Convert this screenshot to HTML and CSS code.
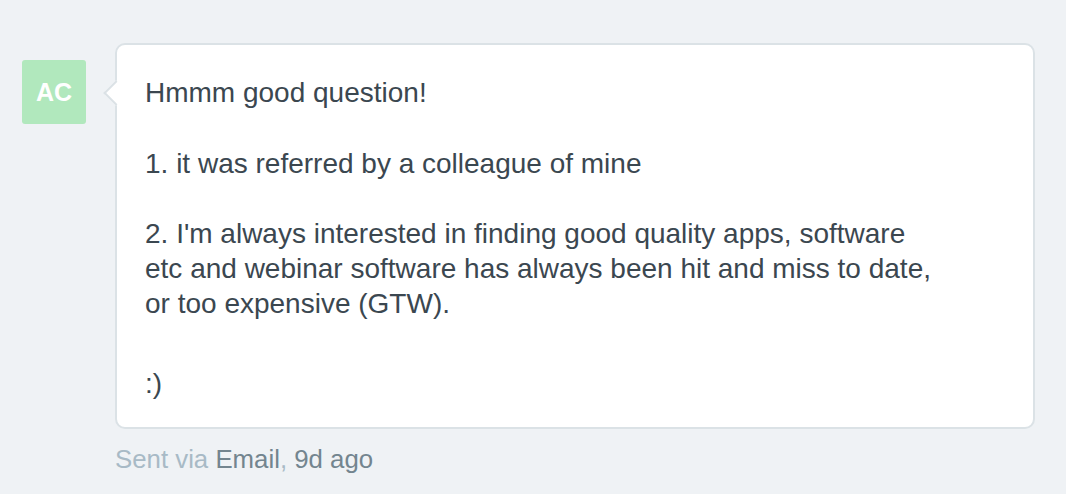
FILE: index.html
```html
<!DOCTYPE html>
<html>
<head>
<meta charset="utf-8">
<link rel="stylesheet" href="styles.css">
</head>
<body>
<div class="message">
  <div class="avatar">AC</div>
  <div class="content">
    <div class="bubble">
      <p>Hmmm good question!</p>
      <p>1. it was referred by a colleague of mine</p>
      <p>2. I'm always interested in finding good quality apps, software<br>etc and webinar software has always been hit and miss to date,<br>or too expensive (GTW).</p>
      <p class="smile">:)</p>
    </div>
    <div class="meta"><span class="via">Sent via</span> <span class="strong">Email</span><span class="via">,</span> <span class="strong">9d ago</span></div>
  </div>
</div>
</body>
</html>
```
FILE: styles.css
```css
html, body {
  margin: 0;
  padding: 0;
  background: #eff2f5;
  font-family: "Liberation Sans", Arial, sans-serif;
}
.message {
  display: flex;
  align-items: flex-start;
  gap: 29px;
  padding: 43px 31px 0 22px;
}
.avatar {
  flex: none;
  width: 64px;
  height: 64px;
  margin-top: 17px;
  border-radius: 3px;
  background: #b1e8bd;
  color: #fff;
  font-weight: bold;
  font-size: 25px;
  display: flex;
  align-items: center;
  justify-content: center;
}
.content {
  flex: 1;
}
.bubble {
  position: relative;
  background: #fff;
  border: 2px solid #dbe2e6;
  border-radius: 10px;
  padding: 30px 28px 26px 28px;
  color: #3b4750;
  font-size: 28px;
  line-height: 35px;
}
.bubble::before {
  content: "";
  position: absolute;
  left: -10px;
  top: 39px;
  width: 16px;
  height: 16px;
  background: #fff;
  border-left: 2px solid #dbe2e6;
  border-bottom: 2px solid #dbe2e6;
  transform: rotate(45deg);
}
.bubble p {
  margin: 0 0 35.5px 0;
}
.bubble p:last-child {
  margin-bottom: 0;
}
.bubble .smile {
  margin-top: 45px;
}
.meta {
  margin-top: 16px;
  font-size: 25.8px;
  color: #a8bac6;
}
.meta .strong {
  color: #73858f;
}
```
